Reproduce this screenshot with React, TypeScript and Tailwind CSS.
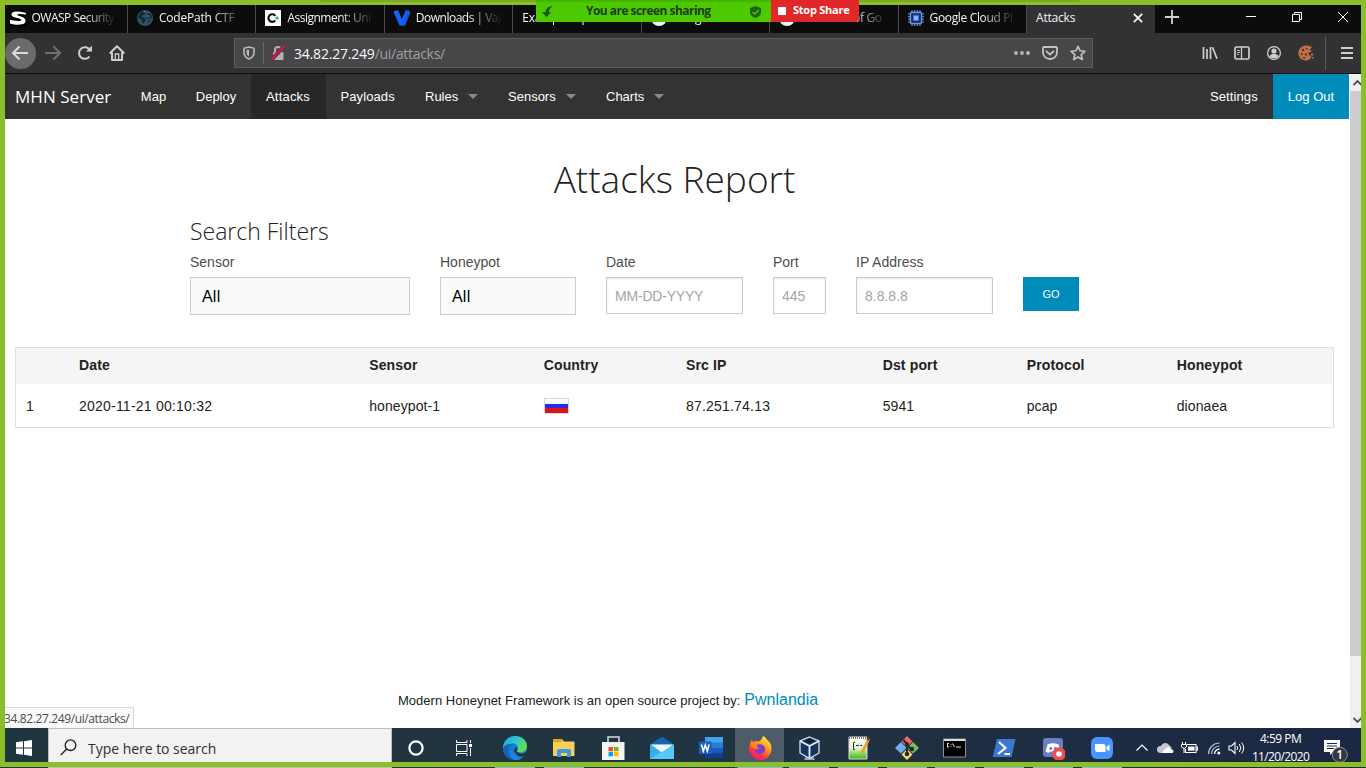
import React from "react";

const ui = "font-['Open_Sans','Noto_Sans',sans-serif]";
const arial = "font-['Liberation_Sans',Arial,sans-serif]";

type SvgProps = { w?: number; h?: number; box?: string; className?: string; children: React.ReactNode };
function Svg({ w = 16, h = w, box, className = "", children }: SvgProps) {
  return (
    <svg width={w} height={h} viewBox={box ?? `0 0 ${w} ${h}`} fill="none" className={`shrink-0 ${className}`}>
      {children}
    </svg>
  );
}

const favicons: Record<string, React.ReactNode> = {
  owasp: (
    <Svg>
      <rect width="16" height="16" fill="#000" />
      <path d="M16 3C12 1.500 4 .5 2 3 .2 5.500 3 7 8.500 8.300c4 1 3.500 2.700-.5 2.700-3 0-6-.5-8-1.200v3.700c5 1.500 12 1.800 14.500-.2 2-2 1-5-2-6.200C9 6 7 5.500 7.200 4.700 7.500 3.500 12 3.800 16 4.500z" fill="#fff" />
    </Svg>
  ),
  codepath: (
    <Svg>
      <circle cx="8" cy="8" r="8" fill="#2d5266" />
      <path d="M2 4l3-3 4 1-1 2-2 1-1 2 3 1 1 2-2 2v2L5 12 4 9 1 8zM10 4l3-1 2 4-1 2-2-1-2 1-1-3zM10 11l3-1-1 3z" fill="#142b38" />
      <path d="M6 1l3 .5-1 1.500zM9 6l2-1 2 1-2 1z" fill="#5b8799" />
    </Svg>
  ),
  assignment: (
    <Svg>
      <rect width="16" height="16" fill="#fff" />
      <path d="M10.300 5.800A3.800 3.800 0 1 0 10.300 10.300" stroke="#111" strokeWidth="2.200" />
      <path d="M12 6.200v3.600M10.200 8h3.600" stroke="#2fb57c" strokeWidth="1.300" />
    </Svg>
  ),
  vagrant: (
    <Svg>
      <path d="M0 1l4-.8 3.800 9L11.800.2 16 1v2l-5 12.500H5.500L0 3z" fill="#1563ff" />
      <path d="M11.800.2L16 1v2l-5 12.500H8l4-11z" fill="#1159e0" />
    </Svg>
  ),
  google: (
    <Svg>
      <circle cx="8" cy="8" r="8" fill="#e8f4ec" />
      <circle cx="8" cy="8" r="4" fill="#278b57" />
    </Svg>
  ),
  chip: (
    <Svg>
      <path d="M4 0v16M6.700 0v16M9.300 0v16M12 0v16M0 4h16M0 6.700h16M0 9.300h16M0 12h16" stroke="#6c97ec" strokeWidth="1.100" />
      <rect x="2.500" y="2.500" width="11" height="11" rx="1" fill="#13234a" stroke="#6c97ec" strokeWidth="1.400" />
      <rect x="5.300" y="5.300" width="5.400" height="5.400" fill="#8db2ff" stroke="#356ae6" />
    </Svg>
  ),
};

const tabs = [
  { icon: "owasp", label: "OWASP Security", pad: "pl-[10px]", track: "tracking-[-0.5px]" },
  { icon: "codepath", label: "CodePath CTF", pad: "pl-[9px]", track: "tracking-[-0.2px]" },
  { icon: "assignment", label: "Assignment: Uni", pad: "pl-[9px]", track: "tracking-[-0.5px]" },
  { icon: "vagrant", label: "Downloads | Vag", pad: "pl-[9px]", track: "tracking-[-0.5px]" },
  { icon: "", label: "Example Inputs", pad: "pl-[9px]", track: "tracking-[-0.25px]" },
  { icon: "google", label: "Google", pad: "pl-[9px]", track: "tracking-[-0.25px]" },
  { icon: "google", label: "Overview of Go", pad: "pl-[9px]", track: "tracking-[-0.35px]" },
  { icon: "chip", label: "Google Cloud Pl", pad: "pl-[9px]", track: "tracking-[-0.35px]" },
];

function TabStrip() {
  return (
    <div className={`flex h-7 shrink-0 bg-[#0c0c0c] text-[12px] text-[#f4f4f4] ${ui}`}>
      <div className="-ml-[5.500px] flex">
        {tabs.map((t) => (
          <div key={t.label} className={`flex w-[128.450px] shrink-0 items-center gap-[6px] border-r border-[#4b4b4d] pb-[3px] pr-2.5 ${t.pad}`}>
            {t.icon && favicons[t.icon]}
            <span className={`min-w-0 flex-1 overflow-hidden whitespace-nowrap leading-5 [mask-image:linear-gradient(to_right,#000_calc(100%-34px),transparent)] ${t.track}`}>{t.label}</span>
          </div>
        ))}
      </div>
      <div className="flex w-[128px] shrink-0 items-center justify-between bg-[#323234] pb-[3px] pl-[9px] pr-[12px]">
        <span className="tracking-[-0.2px]">Attacks</span>
        <Svg w={10}><path d="M.8.8l8.400 8.400M9.200.8L.8 9.200" stroke="#f4f4f4" strokeWidth="1.800" /></Svg>
      </div>
      <div className="flex flex-1 items-center pb-[5px] pl-[10px]">
        <Svg w={14}><path d="M7 0v14M0 7h14" stroke="#d0d0d0" strokeWidth="1.800" /></Svg>
      </div>
      <div className="flex items-center gap-[36px] pb-[5px] pr-[13px]">
        <Svg w={10}><path d="M0 4.500h10" stroke="#fff" /></Svg>
        <Svg w={10}><path d="M.5 2.500h7v7h-7zM2.500 2.500v-2h7v7h-2" stroke="#fff" /></Svg>
        <Svg w={10}><path d="M0 0l10 10M10 0L0 10" stroke="#fff" /></Svg>
      </div>
    </div>
  );
}

function Toolbar() {
  return (
    <div className="flex h-[41px] shrink-0 items-center border-b border-[#0c0c0d] bg-[#323234]">
      <div className="flex size-[31px] shrink-0 items-center justify-center rounded-full bg-[#6b6b6d]">
        <Svg w={18} className="-ml-px"><path d="M17 9H2M8.500 2.500L2 9l6.500 6.500" stroke="#dcdcdc" strokeWidth="2" /></Svg>
      </div>
      <Svg w={18} className="ml-[8px]"><path d="M1 9h15M9.500 2.500L16 9l-6.500 6.500" stroke="#707073" strokeWidth="2" /></Svg>
      <Svg w={16} className="ml-[15px]">
        <path d="M12.500 11.500a5.800 5.800 0 1 1 .3-6.500" stroke="#cfcfd0" strokeWidth="2" />
        <path d="M15 .5v6H9z" fill="#cfcfd0" />
      </Svg>
      <Svg w={16} className="ml-[16px]">
        <path d="M.7 8.500L8 1.200l7.300 7.300M3 7.500V15h10V7.500" stroke="#cfcfd0" strokeWidth="2" strokeLinejoin="round" />
        <path d="M6.300 15V9h3.400v6" stroke="#cfcfd0" strokeWidth="1.300" />
      </Svg>
      <div className="ml-[109px] flex h-[30px] w-[859px] shrink-0 items-center border border-[#5c5c5f] bg-[#474749]">
        <Svg w={12} h={14} className="ml-2">
          <path d="M6 1l5 1.200V6.500c0 3.200-2 5.300-5 6.500-3-1.200-5-3.300-5-6.500V2.200z" stroke="#b9b9ba" strokeWidth="1.600" strokeLinejoin="round" />
          <path d="M6 3.500v7C4.500 9.500 3.500 8.500 3.500 6.500V4z" fill="#b9b9ba" />
        </Svg>
        <div className="ml-[8px] h-[22px] w-px bg-[#68686b]" />
        <Svg w={16} className="ml-[6px]">
          <path d="M5 7V5a3 3 0 0 1 6 0v2" stroke="#b1b1b3" strokeWidth="2" />
          <rect x="3" y="7" width="10.500" height="8" rx="1" fill="#b1b1b3" />
          <path d="M.8 15.500L14.500 1" stroke="#474749" strokeWidth="4" />
          <path d="M1.300 14.500L14.500 1" stroke="#ff0039" strokeWidth="1.800" />
        </Svg>
        <div className={`ml-[8px] flex-1 whitespace-nowrap pt-px text-[14px] leading-5 tracking-[-0.2px] text-[#f9f9fa] ${ui}`}>
          34.82.27.249<span className="tracking-[-0.3px] text-[#a0a0a2]">/ui/attacks/</span>
        </div>
        <Svg w={16} h={4}><circle cx="2" cy="2" r="1.900" fill="#b9b9ba" /><circle cx="8" cy="2" r="1.900" fill="#b9b9ba" /><circle cx="14" cy="2" r="1.900" fill="#b9b9ba" /></Svg>
        <Svg w={16} h={14} className="ml-[12px]">
          <path d="M2 1h12a1 1 0 0 1 1 1v4.500a7 6.500 0 0 1-14 0V2a1 1 0 0 1 1-1z" stroke="#c3c3c4" strokeWidth="1.800" />
          <path d="M4.500 5.300L8 8.500l3.500-3.200" stroke="#c3c3c4" strokeWidth="1.800" strokeLinecap="round" />
        </Svg>
        <Svg w={16} className="ml-[12px] mr-[6px]">
          <path d="M8 1.300l2 4.500 4.900.5-3.700 3.300 1.100 4.900L8 12l-4.300 2.500 1.100-4.900L1.100 6.300 6 5.800z" stroke="#c3c3c4" strokeWidth="1.600" strokeLinejoin="round" />
        </Svg>
      </div>
      <div className="flex flex-1 items-center pl-[109px]">
        <Svg w={16}><path d="M1.500 2v12M5 4v10M8.500 2v12M10.500 2.300l4.500 11.500" stroke="#cfcfd0" strokeWidth="1.700" /></Svg>
        <Svg w={16} className="ml-[16px]">
          <rect x="1" y="2" width="14" height="12" rx="1.500" stroke="#cfcfd0" strokeWidth="1.700" />
          <path d="M7.500 2v12" stroke="#cfcfd0" strokeWidth="1.300" />
          <path d="M3 5.500h3M3 7.500h3M3 9.500h2" stroke="#cfcfd0" strokeWidth=".9" />
        </Svg>
        <Svg w={16} className="ml-[16px]">
          <circle cx="8" cy="8" r="6.400" stroke="#cfcfd0" strokeWidth="1.300" />
          <circle cx="8" cy="6" r="2.600" fill="#cfcfd0" />
          <path d="M3.500 11c1-1.500 2.500-2 4.500-2s3.500.5 4.500 2c-1 1.500-2.700 2.200-4.500 2.200S4.500 12.500 3.500 11z" fill="#cfcfd0" />
        </Svg>
        <Svg w={16} className="ml-[16px]">
          <path d="M8 .5c2.500 0 4.500.5 6 2l-2.500 2.200 2.500 1.500-4 2 1.500 2 2 1-1.500 3A7.500 7.500 0 1 1 8 .5z" fill="#bd7048" />
          <path d="M13 8.500h2.300v2H13zM14 12h1.500v1.500H14z" fill="#bd7048" />
          <path d="M4 4h2v2H4zM8 3h1.500v1.500H8zM3 8h1.500v2H3zM7 8.500h2v2H7zM5 12h2v1.500H5z" fill="#5a2d1b" />
        </Svg>
        <div className="ml-[11px] h-[34px] w-px bg-[#59595b]" />
        <Svg w={12} className="ml-[15px]"><path d="M0 1h12M0 6h12M0 11h12" stroke="#cfcfd0" strokeWidth="1.800" /></Svg>
      </div>
    </div>
  );
}

function Caret() {
  return <Svg w={10} h={5}><path d="M0 0h10L5 5z" fill="#8a8a8a" /></Svg>;
}

function SiteNav() {
  const item = "flex h-full shrink-0 items-center";
  return (
    <nav className={`flex h-[45px] shrink-0 bg-[#333333] text-[13px] text-white ${arial}`}>
      <div className={`${item} w-[121px] pl-[10px] text-[17px] tracking-[0.04px] ${ui}`}>MHN Server</div>
      <div className={`${item} w-[55px] justify-center`}>Map</div>
      <div className={`${item} w-[70px] justify-center`}>Deploy</div>
      <div className={`${item} w-[75px] bg-[#272727] pl-[15px] tracking-[0.2px]`}>Attacks</div>
      <div className={`${item} w-[84px] pl-[14.500px] tracking-[0.1px]`}>Payloads</div>
      <div className={`${item} w-[83px] justify-between pl-[15px] pr-[15px]`}>Rules<Caret /></div>
      <div className={`${item} w-[98px] justify-between pl-[15px] pr-[15px]`}>Sensors<Caret /></div>
      <div className={`${item} w-[88px] justify-between pl-[15px] pr-[15px]`}>Charts<Caret /></div>
      <div className={`${item} ml-auto w-[78px] pl-[15px] tracking-[0.1px]`}>Settings</div>
      <div className={`${item} w-[76px] justify-center bg-[#008cba]`}>Log Out</div>
    </nav>
  );
}

const inset = "border border-[#cccccc] bg-white px-2 pt-[2px] text-[14px] text-[#a5a5a5] shadow-[inset_0_1px_2px_rgba(0,0,0,0.1)]";
function Field({ label, value, width, select = false }: { label: string; value: string; width: string; select?: boolean }) {
  return (
    <label className={`shrink-0 ${width}`}>
      <span className="block h-[24px] text-[14px] leading-[19px] text-[#4d4d4d]">{label}</span>
      <span className={`flex items-center ${select ? "h-[38px] border border-[#cccccc] bg-[#fafafa] px-[11px] pt-[2px] text-[16px] tracking-[0.2px] text-black" : `h-[37px] ${inset}`}`}>
        <span className={value.startsWith("MM") ? "tracking-[-0.2px]" : ""}>{value}</span>
      </span>
    </label>
  );
}

const cols = "grid grid-cols-[63px_290.200px_174.500px_142.300px_196.700px_144px_150px_1fr] items-center";

function Page() {
  return (
    <main className={`flex flex-1 flex-col overflow-hidden bg-white ${arial}`}>
      <h1 className={`mt-[34px] h-[52px] pr-[5px] text-center text-[37px] font-light leading-[52px] text-[#222222] ${ui}`}>Attacks Report</h1>
      <h2 className={`ml-[185px] mt-[10px] h-[32px] text-[23px] font-light leading-[32px] text-[#222222] ${ui}`}>Search Filters</h2>
      <div className="ml-[185px] mt-[6px] flex h-[62px] items-start gap-[30px]">
        <Field label="Sensor" value="All" width="w-[220px]" select />
        <Field label="Honeypot" value="All" width="w-[136px]" select />
        <Field label="Date" value="MM-DD-YYYY" width="w-[137px]" />
        <Field label="Port" value="445" width="w-[53px]" />
        <Field label="IP Address" value="8.8.8.8" width="w-[137px]" />
        <button className="mt-[24px] h-[34px] w-[56px] bg-[#008cba] text-[11px] text-white">GO</button>
      </div>
      <div className="ml-[10px] mt-[32px] h-[81px] w-[1319px] border border-[#dddddd] text-[14px] text-[#222222]">
        <div className={`${cols} h-[36px] bg-[#f5f5f5] pb-[2px] font-bold tracking-[0.15px]`}>
          <span /><span>Date</span><span>Sensor</span><span>Country</span><span>Src IP</span><span>Dst port</span><span>Protocol</span><span>Honeypot</span>
        </div>
        <div className={`${cols} h-[43px] pt-px tracking-[0.1px]`}>
          <span className="pl-[10px]">1</span>
          <span className="tracking-[0.22px]">2020-11-21 00:10:32</span>
          <span>honeypot-1</span>
          <span className="flex h-[16px] w-[25px] flex-col border border-[#d8d8dc]">
            <span className="flex-1 bg-gradient-to-b from-white to-[#f1f1f1]" />
            <span className="flex-1 bg-[#2a2ae8]" />
            <span className="flex-1 bg-[#dd1414]" />
          </span>
          <span className="tracking-[0.2px]">87.251.74.13</span>
          <span>5941</span>
          <span>pcap</span>
          <span>dionaea</span>
        </div>
      </div>
      <footer className="mt-auto flex h-[40px] items-baseline pl-[393px] text-[#222222]">
        <span className="text-[13px] tracking-[0.01px]">Modern Honeynet Framework is an open source project by:</span>
        <a className="ml-[4px] text-[16px] text-[#008cba]">Pwnlandia</a>
      </footer>
    </main>
  );
}

function Scrollbar() {
  return (
    <div className="flex w-3 shrink-0 flex-col border-l border-white bg-[#f0f0f0]">
      <div className="flex h-[17px] items-center pl-[3px]"><Svg w={9} h={6}><path d="M.5 5L4.500 1l4 4" stroke="#505050" strokeWidth="1.800" /></Svg></div>
      <div className="h-[565px] bg-[#cdcdcd]" />
      <div className="mt-auto flex h-[17px] items-center pl-[3px]"><Svg w={9} h={6}><path d="M.5 1l4 4 4-4" stroke="#505050" strokeWidth="1.800" /></Svg></div>
    </div>
  );
}

const apps: { name: string; running?: boolean; art: React.ReactNode }[] = [
  {
    name: "Edge", running: true, art: (
      <>
        <defs><linearGradient id="eg" x1="0" y1="0" x2="1" y2=".5"><stop stopColor="#1ba0dd" /><stop offset=".5" stopColor="#2cc5d4" /><stop offset="1" stopColor="#64db50" /></linearGradient></defs>
        <circle cx="12" cy="12" r="12" fill="#1479ce" />
        <path d="M16 17c3 1.500 6 .5 8-2v5l-3 1c-4 1-8-1-8-5z" fill="#20353f" />
        <path d="M0 11C1 4 6 0 12 0c7 0 12 4.500 12 10 0 4-3 6.500-6.500 6.500-3 0-4-1-3-2.500 1-1.700.5-6.500-5-6.500-5 0-8.500 2.500-9.500 5z" fill="url(#eg)" />
        <path d="M14 11c.5 1.500.3 2.300-.3 3.200-.6 1.500.3 2.200 1.800 2.600-1 .7-2.800.5-3.800-.8-1.200-1.500-.3-4 2.300-5z" fill="#20353f" />
        <path d="M9.500 8.500C3 10 3 20 11 24c-5.500 0-10-4-10.800-9.500C0 10 3.500 7.500 9.500 8.500z" fill="#1663b6" />
        <path d="M9 13c0 5 5 8.500 11 7.500l1.500-.7C19 23 15.500 24.500 11 23.800 7 21.500 6 16 9 13z" fill="#1b86d8" />
      </>
    ),
  },
  {
    name: "Explorer", running: true, art: (
      <>
        <path d="M1 3h9l2 2.500h10.500V20H1z" fill="#fbcf57" /><path d="M1 3h9v3H1z" fill="#e1a51e" />
        <path d="M5 21v-6.500q0-1.500 1.500-1.500h11q1.500 0 1.500 1.500V21h-4v-4H9v4z" fill="#3d9be4" />
      </>
    ),
  },
  {
    name: "Store", art: (
      <>
        <path d="M7 7V1h11v6" stroke="#dadada" strokeWidth="1.500" /><path d="M1 6h22.500v18H1z" fill="#f4f4f4" />
        <path d="M7.500 11H12v4.300H7.500z" fill="#f25022" /><path d="M13 11h4.500v4.300H13z" fill="#7fba00" /><path d="M7.500 16H12v4.300H7.500z" fill="#00a4ef" /><path d="M13 16h4.500v4.300H13z" fill="#ffb900" />
      </>
    ),
  },
  {
    name: "Mail", art: (
      <>
        <path d="M0 8.500L12 .8l12 7.700z" fill="#1066b4" /><path d="M0 8.500h24V23H0z" fill="#35b0ee" /><path d="M1 8.500h22L12.500 17z" fill="#f2f4f7" /><path d="M0 23L24 8.500V23z" fill="#57c8f8" />
      </>
    ),
  },
  {
    name: "Word", art: (
      <>
        <path d="M6 1h18v7H6z" fill="#41a5ee" /><path d="M6 6.500h18V12H6z" fill="#2b7cd3" /><path d="M6 12h18v5.500H6z" fill="#185abd" /><path d="M6 17.500h18V22H6z" fill="#103f91" />
        <rect y="5.500" width="12.500" height="12.500" rx="1" fill="#1c5fc0" /><path d="M2.500 8.500l1.800 6.500 2-6 2 6 1.800-6.500" stroke="#fff" strokeWidth="1.600" />
      </>
    ),
  },
  {
    name: "Firefox", running: true, art: (
      <>
        <defs><linearGradient id="ff" x1=".8" y1="0" x2=".2" y2="1"><stop stopColor="#fff44f" /><stop offset=".4" stopColor="#ff980e" /><stop offset=".7" stopColor="#ff3647" /><stop offset="1" stopColor="#e31587" /></linearGradient></defs>
        <path d="M15 0c4 2 4 4 5 5 2 1 3.500 4 3.500 7.500C23.500 19 18.500 24 12.500 24S1 19 1 12.500C1 8 3 5 4 3.500c0 1.200.5 1.800 1 2.500 1.800-1.200 4-1 5-.5C12 5 14 3.500 15 0z" fill="url(#ff)" />
        <path d="M9 9c2-1.500 7-1 8 3 .8 3-1.500 6-4.700 6S6.500 16 7 13c2 1 4 .5 4.500-.7C11 11 8 11.500 9 9z" fill="#7a3ddb" />
        <path d="M4 4c.2 3 2 3.300 5 4-2 1-1 3 1 3-2 3-6 1-7-2z" fill="#ff8a16" />
      </>
    ),
  },
  {
    name: "VirtualBox", running: true, art: (
      <>
        <path d="M9 20h7l2 4H7z" fill="#8ca5c4" /><path d="M12.500 1L22 5v12l-9.500 5.500L3 17V5z" fill="#153561" stroke="#d9e4f0" strokeWidth="1.300" />
        <path d="M3 5l9.500 5L22 5M12.500 10v12" stroke="#e4edf7" strokeWidth="1.800" /><path d="M8 5l4.500-2L17 5l-4.500 2.300z" fill="#0a1a34" />
      </>
    ),
  },
  {
    name: "Notepad++", running: true, art: (
      <>
        <defs><linearGradient id="np" x1="0" y1="0" x2="0" y2="1"><stop stopColor="#fff" /><stop offset=".5" stopColor="#e2f5cf" /><stop offset="1" stopColor="#3bb900" /></linearGradient></defs>
        <path d="M3 1h18v22H3z" fill="url(#np)" stroke="#dedede" /><path d="M3 2h18" stroke="#777" strokeDasharray="1 1" strokeWidth="2" />
        <path d="M9 6.500H7.500v7H9M10 9.500h3M14 9.500h2" stroke="#333" />
        <path d="M22 2l2 1.500L18 16l-3 2 .5-3.500z" fill="#e7a32b" /><path d="M21 1l3 1-1 3-2.500-1.500z" fill="#8d3426" />
      </>
    ),
  },
  {
    name: "Git", running: true, art: (
      <>
        <path d="M12 0l5.500 5.500L12 11 6.500 5.500z" fill="#ef6a68" /><path d="M6 6l5.500 6L6 17.500 0 12z" fill="#78aaf0" /><path d="M18 6l6 6-6 5.500-5.500-5.500z" fill="#78c257" /><path d="M12 13l5.500 5.500L12 24l-5.500-5.500z" fill="#fbd96c" />
        <path d="M8.500 4L12 8v11M12 9l4.500 4.500" stroke="#24292e" strokeWidth="2" /><circle cx="12" cy="8" r="2" fill="#24292e" /><circle cx="12" cy="18" r="2.300" fill="#24292e" /><circle cx="17" cy="13" r="2.200" fill="#24292e" />
      </>
    ),
  },
  {
    name: "Command", running: true, art: (
      <>
        <path d="M.5 3h22v18H.5z" fill="#000" stroke="#8e9293" /><path d="M1 4h21" stroke="#d9d9d9" strokeWidth="2" />
        <path d="M6 7.500H4.500v3.500H6M8 8v.8M8 10.200v.8M9.500 7.500l2 3.500M13 11h5" stroke="#e5e5e5" />
      </>
    ),
  },
  {
    name: "PowerShell", running: true, art: (
      <>
        <path d="M5 3h18.500L19.500 21H.8z" fill="#3c78d0" /><path d="M7 6l6.500 6L6 18M12.500 18H18" stroke="#fff" strokeWidth="2" />
      </>
    ),
  },
  {
    name: "Discord", running: true, art: (
      <>
        <rect x="2" y="2" width="20" height="19" rx="3" fill="#6b7ec1" />
        <path d="M6.500 8.500q5.500-2.500 11 0l2 7-3 1.500-1.500-1.500H9L7.500 17l-3-1.500z" fill="#fff" /><circle cx="9.700" cy="12.500" r="1.400" fill="#6b7ec1" /><circle cx="14.300" cy="12.500" r="1.400" fill="#6b7ec1" />
        <circle cx="18" cy="18" r="6.800" fill="#ed4f52" /><circle cx="18" cy="18" r="2.800" fill="#fff" />
      </>
    ),
  },
  {
    name: "Zoom", running: true, art: (
      <>
        <rect x="1" y="1" width="22" height="22" rx="6" fill="#4a94ff" /><path d="M5 8h8q2.500 0 2.500 2.500V16h-8Q5 16 5 13.500zM16.500 11l3-2.500v7l-3-2.500z" fill="#fff" />
      </>
    ),
  },
];

function Taskbar() {
  return (
    <div className={`flex h-10 shrink-0 bg-gradient-to-r from-[#20363f] via-[#203441] to-[#1b2743] ${ui}`}>
      <div className="flex w-[48px] shrink-0 justify-center pt-[12px]">
        <Svg w={16}><path d="M0 2.300L7 1.300v6.200H0zM8 1.200L16 0v7.500H8zM0 8.500h7v6.200l-7-1zM8 8.500h8V16l-8-1.200z" fill="#fff" /></Svg>
      </div>
      <div className="flex w-[344px] shrink-0 border border-[#bdbdbd] bg-[#f2f2f2] pl-[11px] pt-[10px]">
        <Svg w={17}><circle cx="10.500" cy="6.200" r="5.300" stroke="#1c1c1c" strokeWidth="1.300" /><path d="M6.700 10L.8 16" stroke="#1c1c1c" strokeWidth="1.300" /></Svg>
        <span className="ml-[11px] text-[14px] leading-5 tracking-[-0.03px] text-[#2f2f2f]">Type here to search</span>
      </div>
      <div className="flex w-12 shrink-0 justify-center pt-[12px]"><Svg w={16}><circle cx="8" cy="8" r="6.600" stroke="#fff" strokeWidth="2.200" /></Svg></div>
      <div className="flex w-[51px] shrink-0 justify-center pr-[3px] pt-[12px]">
        <Svg w={16}><path d="M.5 0v2.500h10.500V0M.5 16v-2.500h10.500V16M.5 4.500h10.500v7H.5zM14.500 0v3M14.500 8v8" stroke="#fff" /><path d="M13 4h3v3h-3z" fill="#fff" /></Svg>
      </div>
      <div className="flex shrink-0">
        {apps.map((a) => (
          <div key={a.name} className={`flex w-[48.900px] shrink-0 flex-col items-center justify-between pt-2 ${a.name === "Firefox" ? "bg-gradient-to-r from-[#4d5c66] to-[#4d5c66]" : ""}`}>
            <Svg w={24}>{a.art}</Svg>
            {a.running && <div className={`h-px bg-[#85b9df] ${a.name === "Firefox" ? "w-[44px]" : "w-10"}`} />}
          </div>
        ))}
      </div>
      <div className="ml-[9px] flex shrink-0 pt-[13px]">
        <Svg w={12} h={14}><path d="M.5 9.500L6 4l5.500 5.500" stroke="#fff" strokeWidth="1.200" /></Svg>
        <Svg w={17} h={14} className="ml-[9px]">
          <path d="M4 5a4.500 4.500 0 0 1 8-1l3 3-10 5H3A3.500 3.500 0 0 1 4 5z" fill="#c4c8ce" /><path d="M5 12l2-3 4-3q2.500 0 3 2 2.500.3 2.500 2.500 0 1.500-2 1.500z" fill="#fff" />
        </Svg>
        <Svg w={17} h={14} className="ml-[7px]">
          <path d="M6 3.500h9v8H4.500V8M15 6h1.500v3H15" stroke="#fff" strokeWidth="1.100" /><path d="M7 5.500h6.500v4.200H7z" fill="#fff" /><path d="M1.500 1v3M4.500 1v3M.5 3.500h5V6L3 7.500.5 6zM3 7v5" stroke="#fff" />
        </Svg>
        <Svg w={14} className="ml-[9px]">
          <circle cx="11.800" cy="12" r="1.500" fill="#fff" /><path d="M7.500 13a5 5 0 0 1 5-5" stroke="#fff" strokeWidth="1.300" /><path d="M4.500 13a8 8 0 0 1 8-8M1.500 13a11 11 0 0 1 11-11" stroke="#b9bfc9" strokeWidth="1.200" />
        </Svg>
        <Svg w={17} h={14} className="ml-[7px]">
          <path d="M1 5h2.500L7 1.500v11L3.500 9H1z" stroke="#fff" strokeWidth="1.100" /><path d="M9 5q1.500 2 0 4M11.300 3q3 4 0 8M13.700 1.500q4 5.500 0 11" stroke="#fff" />
        </Svg>
      </div>
      <div className="w-[72px] shrink-0 pt-[2px] text-center text-[12px] leading-[18px] text-white">
        <div className="tracking-[-0.5px]">4:59 PM</div>
        <div className="tracking-[-0.63px]">11/20/2020</div>
      </div>
      <div className="flex shrink-0 pl-[7px] pt-[11px]">
        <Svg w={25} h={27}>
          <path d="M0 1h16v12H9l-3 3v-3H0z" fill="#fff" /><path d="M3 4.500h10M3 7h10M3 9.500h7" stroke="#1b2743" />
          <circle cx="15.800" cy="15.800" r="7.500" fill="#353a40" stroke="#8c8f94" />
          <text x="15.800" y="20" fill="#fff" fontSize="12" fontWeight="600" textAnchor="middle" fontFamily="Open Sans">1</text>
        </Svg>
      </div>
    </div>
  );
}

export default function App() {
  return (
    <div className="relative flex h-[768px] w-[1366px] flex-col overflow-hidden bg-[#8cbe29]">
      <div className="mx-[5px] mt-[5px] flex min-h-0 flex-1 flex-col">
        <TabStrip />
        <Toolbar />
        <div className="flex min-h-0 flex-1">
          <div className="flex w-[1344px] shrink-0 flex-col">
            <SiteNav />
            <Page />
          </div>
          <Scrollbar />
        </div>
      </div>
      <Taskbar />

      <div className={`absolute left-0 top-[707px] h-[21px] w-[134px] whitespace-nowrap border border-[#d9d9d9] border-b-0 bg-[#f9f9f9] pl-[3px] text-[12px] leading-[22px] tracking-[-0.38px] text-[#4b4b4b] ${ui}`}>34.82.27.249/ui/attacks/</div>

      <div className="pointer-events-none absolute inset-x-0 top-0 h-[767px] border-[5px] border-[#8cbe29]" />

      <div className="absolute left-[320px] top-0 h-[2px] w-[760px] rounded-b bg-[#7fa82b]" />
      <div className={`absolute left-[536px] top-0 flex h-[22px] text-[12px] font-bold ${ui}`}>
        <div className="flex w-[235px] items-center bg-gradient-to-b from-[#41ad02] via-[#4dc900] via-15% to-[#4dc900] text-[#203c20]">
          <Svg w={11} className="ml-[6px]"><path d="M11 0Q4 0 3.500 6H0l4.500 5L9 6.500H6.800Q7 2 11 0z" fill="#175c13" /></Svg>
          <span className="ml-[33px] w-[126px] shrink-0 whitespace-nowrap tracking-[-0.54px]">You are screen sharing</span>
          <Svg w={11} h={12} className="ml-[38px] mt-[2px]"><path d="M5.500 0L11 2v4q0 4-5.500 6Q0 10 0 6V2z" fill="#1c6213" /><path d="M2.500 6l2.300 2 4-4" stroke="#4dc900" strokeWidth="1.400" /></Svg>
        </div>
        <div className="flex w-[88px] items-center rounded-br bg-[#e02828] pb-[1px] text-[11px] text-white">
          <div className="ml-[7px] size-2 bg-white" />
          <span className="ml-[7px] whitespace-nowrap tracking-[-0.25px]">Stop Share</span>
        </div>
      </div>
    </div>
  );
}
